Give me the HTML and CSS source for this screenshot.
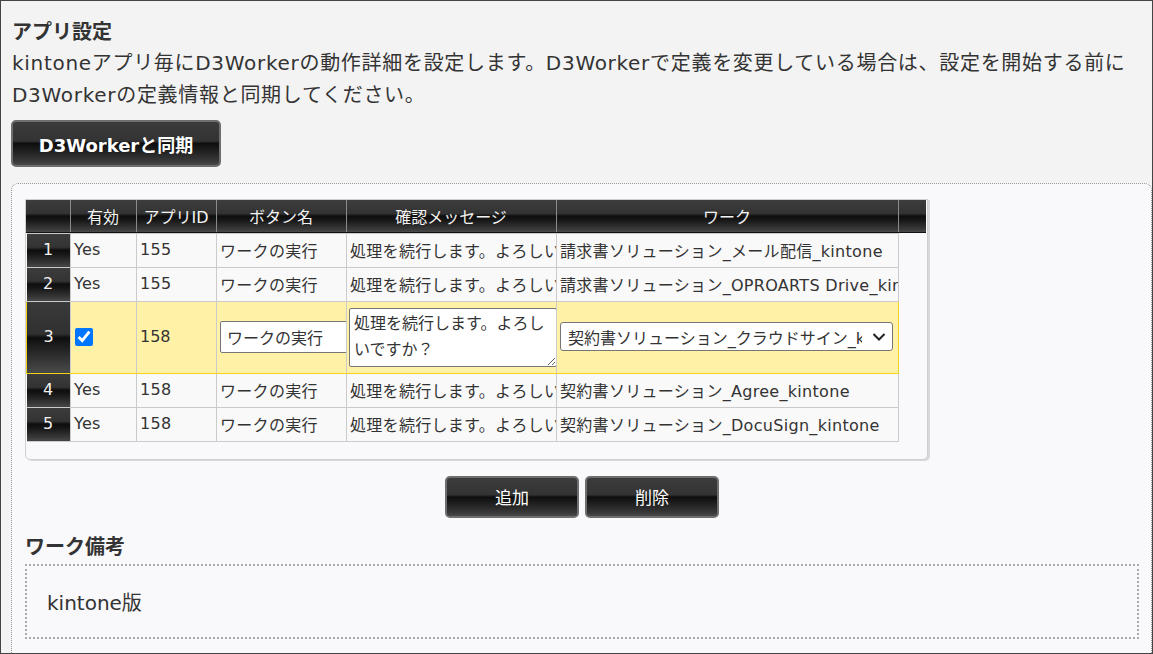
FILE: index.html
```html
<!DOCTYPE html>
<html lang="ja">
<head>
<meta charset="utf-8">
<link rel="stylesheet" href="styles.css">
</head>
<body>
<div class="frame">
  <h1 class="title">アプリ設定</h1>
  <p class="desc">kintoneアプリ毎にD3Workerの動作詳細を設定します。D3Workerで定義を変更している場合は、設定を開始する前に<br>D3Workerの定義情報と同期してください。</p>
  <button class="btn btn-sync">D3Workerと同期</button>
  <div class="panel">
    <div class="grid-wrap">
      <table class="grid head">
        <colgroup><col class="c-no"><col class="c-en"><col class="c-id"><col class="c-bn"><col class="c-msg"><col class="c-work"><col class="c-sp"></colgroup>
        <tr><th class="dark"></th><th class="dark">有効</th><th class="dark">アプリID</th><th class="dark">ボタン名</th><th class="dark">確認メッセージ</th><th class="dark">ワーク</th><th class="dark"></th></tr>
      </table>
      <table class="grid body">
        <colgroup><col class="c-no"><col class="c-en"><col class="c-id"><col class="c-bn"><col class="c-msg"><col class="c-work"></colgroup>
        <tr><td class="dark num">1</td><td>Yes</td><td>155</td><td>ワークの実行</td><td>処理を続行します。よろしいですか？</td><td>請求書ソリューション_メール配信_kintone</td></tr>
        <tr><td class="dark num">2</td><td>Yes</td><td>155</td><td>ワークの実行</td><td>処理を続行します。よろしいですか？</td><td>請求書ソリューション_OPROARTS Drive_kintone</td></tr>
        <tr class="edit"><td class="dark num">3</td><td><input type="checkbox" class="chk" checked></td><td>158</td><td><input type="text" class="txt" value="ワークの実行"></td><td><textarea class="ta">処理を続行します。よろしいですか？</textarea></td><td><div class="sel"><span class="sel-text">契約書ソリューション_クラウドサイン_kintone</span><svg class="chev" viewBox="0 0 14 10" width="14" height="10"><path d="M1.5 2 L7 7.5 L12.5 2" fill="none" stroke="#222" stroke-width="2"/></svg></div></td></tr>
        <tr><td class="dark num">4</td><td>Yes</td><td>158</td><td>ワークの実行</td><td>処理を続行します。よろしいですか？</td><td>契約書ソリューション_Agree_kintone</td></tr>
        <tr><td class="dark num">5</td><td>Yes</td><td>158</td><td>ワークの実行</td><td>処理を続行します。よろしいですか？</td><td>契約書ソリューション_DocuSign_kintone</td></tr>
      </table>
    </div>
    <div class="actions">
      <button class="btn btn-act">追加</button>
      <button class="btn btn-act">削除</button>
    </div>
    <h2 class="sub">ワーク備考</h2>
    <div class="remark">kintone版</div>
  </div>
</div>
</body>
</html>
```

FILE: styles.css
```css
* { box-sizing: border-box; }
html, body { margin: 0; padding: 0; }
body {
  font-family: "DejaVu Sans", "Noto Sans CJK JP", sans-serif;
  color: #333;
  background: #f3f3f3;
}
.frame {
  width: 1153px;
  height: 654px;
  border: 1px solid #444;
  overflow: hidden;
  padding: 16px 0 0 10px;
  background: #f3f3f3;
}
.title {
  margin: 0;
  font-size: 20px;
  line-height: 30px;
  font-weight: bold;
  padding-left: 1px;
}
.desc {
  margin: 0;
  font-size: 20px;
  line-height: 32px;
  padding-left: 1px;
  white-space: nowrap;
  letter-spacing: 0.7px;
}
.dark {
  background: linear-gradient(to bottom, #3c3c3c 0%, #333 42%, #0e0e0e 50%, #161616 62%, #3a3a3a 92%, #4a4a4a 100%);
  color: #f2f2f2;
}
.btn {
  display: block;
  font-family: "DejaVu Sans", "Noto Sans CJK JP", sans-serif;
  background: linear-gradient(to bottom, #3c3c3c 0%, #333 44%, #0e0e0e 50%, #1a1a1a 62%, #3a3a3a 92%, #4a4a4a 100%);
  color: #fff;
  border: 2px solid #6e6e6e;
  border-radius: 5px;
  cursor: pointer;
}
.btn-sync {
  margin-top: 9px;
  width: 210px;
  height: 47px;
  font-size: 18px;
  font-weight: bold;
  letter-spacing: 0;
  padding: 0;
}
.panel {
  margin-top: 16px;
  border: 1px dotted #999;
  border-radius: 7px 7px 0 0;
  background: #f9f8fa;
  padding: 15px 12px 20px 13px;
  min-height: 480px;
}
.grid-wrap {
  width: 903px;
  border: 1px solid #cfcfcf;
  border-radius: 0 0 5px 5px;
  box-shadow: 2px 1px 0 #d8d8d8;
  padding-bottom: 17px;
  background: #f9f8fa;
}
.grid {
  border-collapse: collapse;
  table-layout: fixed;
}
.grid.head { width: 900px; }
.grid.body { width: 872px; }
.c-no { width: 44px; }
.c-en { width: 66px; }
.c-id { width: 80px; }
.c-bn { width: 130px; }
.c-msg { width: 210px; }
.c-work { width: 342px; }
.c-sp { width: 28px; }
.grid th {
  height: 32px;
  font-size: 16px;
  font-weight: normal;
  text-align: center;
  border-left: 1px solid #8a8a8a;
  border-bottom: 1px solid #111;
  padding: 0;
  white-space: nowrap;
  overflow: hidden;
}
.grid th:first-child { border-left: none; }
.grid td {
  height: 34px;
  font-size: 16px;
  border: 1px solid #cbcbcb;
  padding: 0 3px 1px;
  white-space: nowrap;
  overflow: hidden;
  background: #f9f9f9;
  color: #333;
  letter-spacing: 0.3px;
}
.grid td.dark {
  background: linear-gradient(to bottom, #3c3c3c 0%, #333 42%, #0e0e0e 50%, #161616 62%, #3a3a3a 92%, #4a4a4a 100%);
  color: #f2f2f2;
  text-align: center;
  border-left: none;
  border-color: #cbcbcb;
}
.grid tr.edit td {
  height: 72px;
  background: #fff1a6;
  border-top: 1px solid #f3d21c;
  border-bottom: 1px solid #f3d21c;
  letter-spacing: 0;
}
.grid tr.edit td.dark {
  background: linear-gradient(to bottom, #3a3a3a 0%, #303030 46%, #0d0d0d 51%, #1a1a1a 60%, #444 95%, #4a4a4a 100%);
  border-left: 1px solid #f3d21c;
}
.grid tr.edit td:last-child { border-right: 1px solid #f3d21c; }
.chk {
  width: 18px;
  height: 18px;
  margin: 0 0 0 1px;
  vertical-align: middle;
  accent-color: #0075ff;
}
.txt {
  width: 140px;
  height: 32px;
  font-family: "DejaVu Sans", "Noto Sans CJK JP", sans-serif;
  font-size: 16px;
  border: 1px solid #767676;
  border-radius: 2px;
  padding: 0 6px;
  color: #333;
  background: #fff;
}
.grid tr.edit td:nth-child(5) { padding: 0 0 0 2px; }
.ta {
  display: block;
  width: 208px;
  height: 59px;
  font-family: "DejaVu Sans", "Noto Sans CJK JP", sans-serif;
  font-size: 16px;
  line-height: 26px;
  border: 1px solid #767676;
  border-radius: 2px;
  padding: 2px 4px;
  resize: both;
  overflow: hidden;
  color: #333;
  background: #fff;
}
.sel {
  display: flex;
  align-items: center;
  width: 333px;
  height: 29px;
  border: 1px solid #767676;
  border-radius: 3px;
  background: #fff;
  padding: 0 6px 0 7px;
  color: #333;
}
.sel-text {
  flex: 1;
  overflow: hidden;
  white-space: nowrap;
  font-size: 16px;
}
.chev { margin-left: 10px; flex: none; }
.actions {
  display: flex;
  justify-content: center;
  gap: 6px;
  margin-top: 16px;
}
.btn-act {
  width: 134px;
  height: 42px;
  font-size: 17px;
}
.sub {
  margin: 16px 0 0;
  font-size: 20px;
  line-height: 26px;
  font-weight: bold;
}
.remark {
  margin-top: 4px;
  border: 2px dotted #aaa;
  height: 75px;
  padding: 0 20px;
  display: flex;
  align-items: center;
  font-size: 20px;
  color: #333;
}
```
